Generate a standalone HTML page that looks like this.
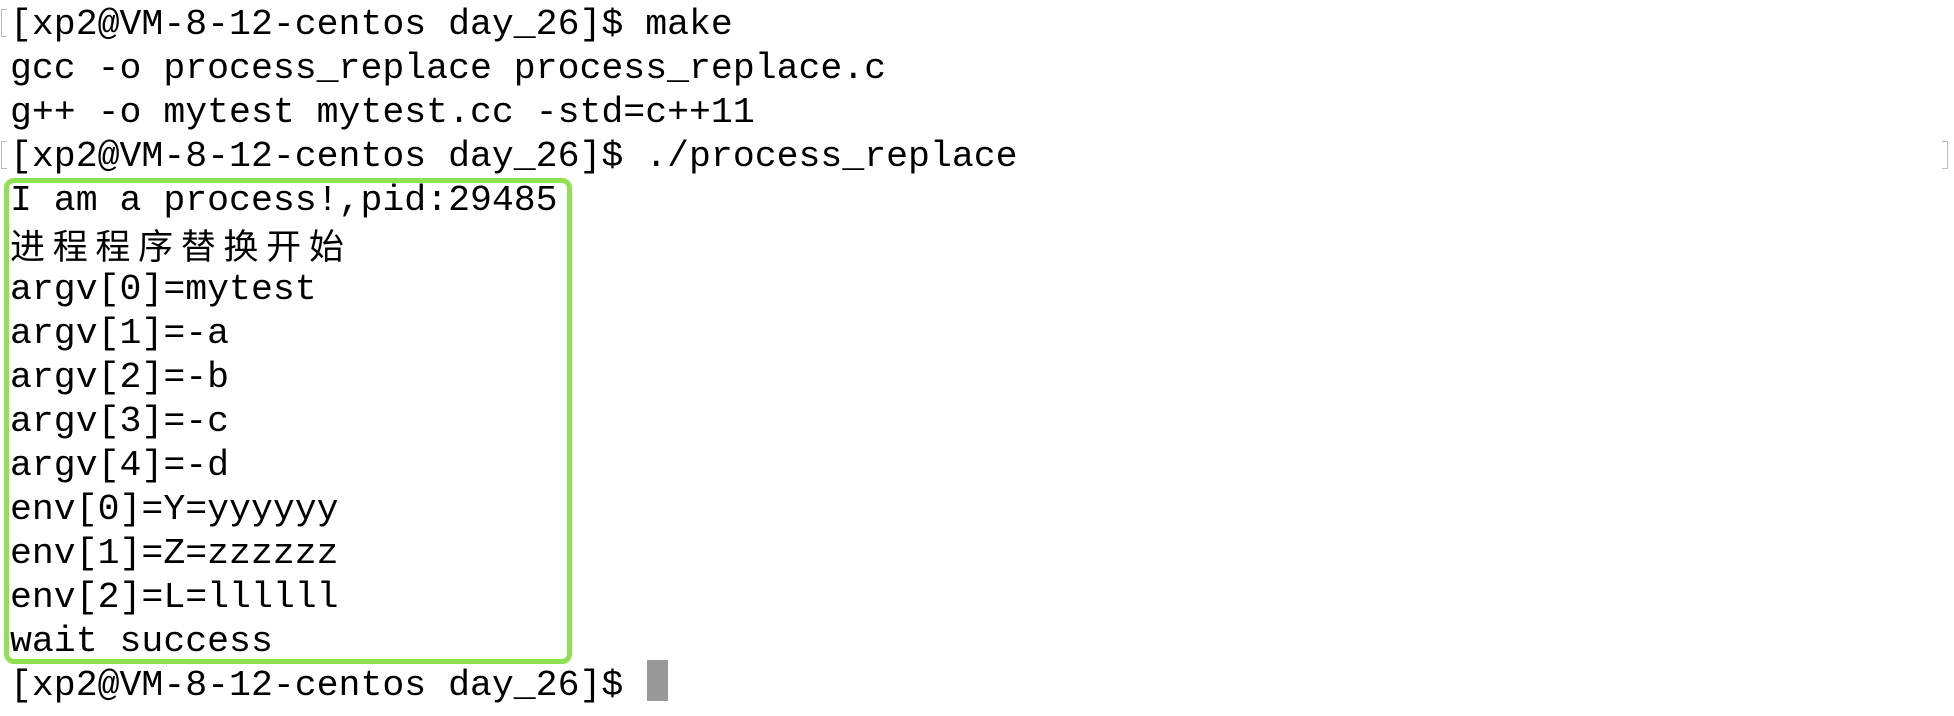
<!DOCTYPE html>
<html><head><meta charset="utf-8"><style>
html,body{margin:0;padding:0;background:#fff;width:1954px;height:716px;overflow:hidden;position:relative}
.t{position:absolute;left:10px;top:3px;font-family:"Liberation Mono",monospace;font-size:36.5px;line-height:44.1px;color:#000}
.t div{height:44.1px;white-space:pre}
.cj span{display:inline-block;width:42.7px;font-family:"Noto Sans CJK SC",sans-serif;font-size:35px}
.box{position:absolute;left:4px;top:178px;width:558px;height:476px;border:5px solid #8ee24f;border-radius:10px}
.cur{position:absolute;left:647px;top:660px;width:21px;height:41px;background:#999}
.lb{position:absolute;left:1px;width:5px;height:26px;border:1px solid #bbb;border-right:none}
.rb{position:absolute;left:1942px;width:5px;height:26px;border:1px solid #bbb;border-left:none}
</style></head><body>
<div class="lb" style="top:9px"></div>
<div class="lb" style="top:141px"></div>
<div class="rb" style="top:141px"></div>
<div class="box"></div>
<div class="t"><div>[xp2@VM-8-12-centos day_26]$ make</div><div>gcc -o process_replace process_replace.c</div><div>g++ -o mytest mytest.cc -std=c++11</div><div>[xp2@VM-8-12-centos day_26]$ ./process_replace</div><div>I am a process!,pid:29485</div><div class="cj"><span>进</span><span>程</span><span>程</span><span>序</span><span>替</span><span>换</span><span>开</span><span>始</span></div><div>argv[0]=mytest</div><div>argv[1]=-a</div><div>argv[2]=-b</div><div>argv[3]=-c</div><div>argv[4]=-d</div><div>env[0]=Y=yyyyyy</div><div>env[1]=Z=zzzzzz</div><div>env[2]=L=llllll</div><div>wait success</div><div>[xp2@VM-8-12-centos day_26]$ </div></div>
<div class="cur"></div>
</body></html>
